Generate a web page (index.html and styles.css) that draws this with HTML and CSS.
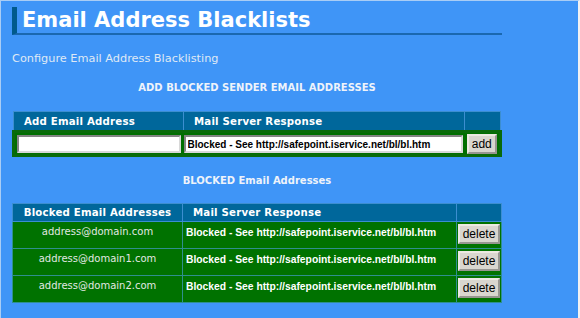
FILE: index.html
```html
<!DOCTYPE html>
<html>
<head>
<meta charset="UTF-8">
<title>Email Address Blacklists</title>
<link rel="stylesheet" href="styles.css">
</head>
<body>
<div id="page">
  <h1 class="title">Email Address Blacklists</h1>
  <p class="intro">Configure Email Address Blacklisting</p>

  <div class="caption">ADD BLOCKED SENDER EMAIL ADDRESSES</div>
  <table class="grid add">
    <colgroup><col class="k1"><col class="k2"><col class="k3"></colgroup>
    <tr class="head">
      <th>Add Email Address</th>
      <th>Mail Server Response</th>
      <th></th>
    </tr>
    <tr class="row">
      <td class="c1"><input type="text" class="field addr"></td>
      <td class="c2"><input type="text" class="field resp" value="Blocked - See http://safepoint.iservice.net/bl/bl.htm"></td>
      <td class="c3"><button class="btn">add</button></td>
    </tr>
  </table>

  <div class="caption second">BLOCKED Email Addresses</div>
  <table class="grid list">
    <colgroup><col class="k1"><col class="k2"><col class="k3"></colgroup>
    <tr class="head">
      <th class="c1">Blocked Email Addresses</th>
      <th>Mail Server Response</th>
      <th></th>
    </tr>
    <tr class="row">
      <td class="addr">address@domain.com</td>
      <td class="resp">Blocked - See http://safepoint.iservice.net/bl/bl.htm</td>
      <td class="c3"><button class="btn">delete</button></td>
    </tr>
    <tr class="row">
      <td class="addr">address@domain1.com</td>
      <td class="resp">Blocked - See http://safepoint.iservice.net/bl/bl.htm</td>
      <td class="c3"><button class="btn">delete</button></td>
    </tr>
    <tr class="row">
      <td class="addr">address@domain2.com</td>
      <td class="resp">Blocked - See http://safepoint.iservice.net/bl/bl.htm</td>
      <td class="c3"><button class="btn">delete</button></td>
    </tr>
  </table>
</div>
</body>
</html>
```

FILE: styles.css
```css
html, body{margin:0;padding:0;}
body{background:#3f95f7;font-family:"DejaVu Sans",Verdana,sans-serif;}
#page{height:314px;border-top:1px solid #a9cdf5;border-left:1px solid #a9cdf5;border-right:2px solid #f2f2f2;border-bottom:2px solid #f2f2f2;padding:6px 0 0 11px;overflow:hidden;}
.title{margin:0;width:480px;font-size:21px;line-height:26px;color:#fff;font-weight:bold;border-left:5px solid #005a8c;border-bottom:2px solid #1a68b0;padding:0 0 0 5px;}
.intro{margin:17px 0 0 0;font-size:11.3px;color:#dfe9f5;}
.caption{width:490px;text-align:center;font-size:10px;font-weight:bold;color:#eef3fa;margin:17px 0 18px 0;}
.caption.second{margin:18px 0 17px 0;}
.grid{width:490px;border-collapse:collapse;table-layout:fixed;}
.grid .k1{width:170px;}
.add .k2{width:281px;}
.list .k2{width:274px;}
.grid th{background:#00679b;color:#fff;font-size:10.2px;letter-spacing:0.2px;text-align:left;height:18px;padding:0 0 0 10px;border:1px solid #3c8ed0;overflow:hidden;white-space:nowrap;}
.list th{height:17px;}
.grid .c3{padding:0;}
.add .row td{background:#006e00;border-top:3px solid #0a6a0a;border-bottom:3px solid #0a6a0a;padding:0;height:18px;}
.add .row .c1{border-left:3px solid #0a6a0a;padding-left:2px;}
.add .row .c3{border-right:3px solid #0a6a0a;text-align:center;}
.field{box-sizing:border-box;height:18px;border:2px inset #d8d8d8;background:#fff;margin:0;vertical-align:middle;}
.addr.field{width:164px;}
.resp.field{width:279px;font-family:"Liberation Sans",Arial,sans-serif;font-weight:bold;font-size:10px;padding:0 2px;}
.btn{box-sizing:border-box;height:20px;font-family:"Liberation Sans",Arial,sans-serif;font-size:12px;background:#d9d6cf;border:2px outset #ece9e2;padding:0 3px;margin:0;color:#000;vertical-align:middle;}
.list th.c1{text-align:center;padding:0;}
.list .row td{background:#007200;border:1px solid #2f8f8f;vertical-align:top;padding:0;}
.list .row td.addr{font-size:10px;color:#e2e8e2;text-align:center;padding-top:4px;height:22px;}
.list .row td.resp{font-family:"Liberation Sans",Arial,sans-serif;font-weight:bold;font-size:10.3px;color:#fff;padding:5px 0 0 3px;height:21px;white-space:nowrap;overflow:hidden;}
.list .row .c3{text-align:center;padding-top:2px;height:24px;}
```
